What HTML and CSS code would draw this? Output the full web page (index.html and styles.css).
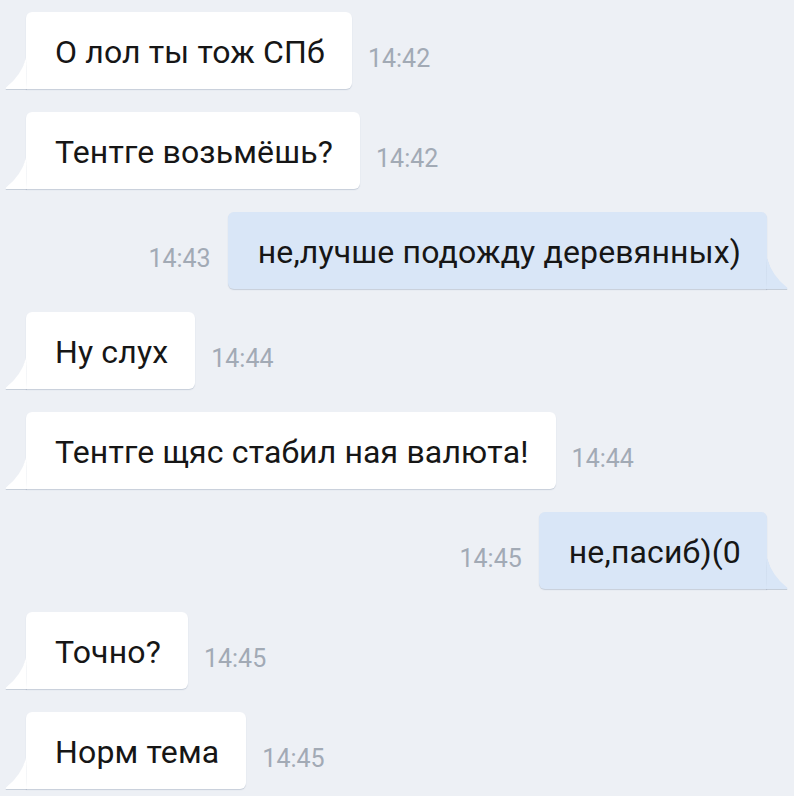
FILE: index.html
```html
<!DOCTYPE html>
<html lang="ru">
<head>
<meta charset="utf-8">
<link rel="stylesheet" href="styles.css">
</head>
<body>
<div class="chat">
  <div class="row in">
    <div class="bubble">О лол ты тож СПб<svg class="tail" viewBox="0 0 22 31"><path d="M21 0 Q16 18 1 29.5 Q0 31 2 31 L22 31 Z"/></svg></div>
    <span class="time">14:42</span>
  </div>
  <div class="row in">
    <div class="bubble">Тентге возьмёшь?<svg class="tail" viewBox="0 0 22 31"><path d="M21 0 Q16 18 1 29.5 Q0 31 2 31 L22 31 Z"/></svg></div>
    <span class="time">14:42</span>
  </div>
  <div class="row out">
    <span class="time">14:43</span>
    <div class="bubble">не,лучше подожду деревянных)<svg class="tail" viewBox="0 0 22 31"><path d="M1 0 Q6 18 21 29.5 Q22 31 20 31 L0 31 Z"/></svg></div>
  </div>
  <div class="row in">
    <div class="bubble">Ну слух<svg class="tail" viewBox="0 0 22 31"><path d="M21 0 Q16 18 1 29.5 Q0 31 2 31 L22 31 Z"/></svg></div>
    <span class="time">14:44</span>
  </div>
  <div class="row in">
    <div class="bubble">Тентге щяс стабил ная валюта!<svg class="tail" viewBox="0 0 22 31"><path d="M21 0 Q16 18 1 29.5 Q0 31 2 31 L22 31 Z"/></svg></div>
    <span class="time">14:44</span>
  </div>
  <div class="row out">
    <span class="time">14:45</span>
    <div class="bubble">не,пасиб)(0<svg class="tail" viewBox="0 0 22 31"><path d="M1 0 Q6 18 21 29.5 Q22 31 20 31 L0 31 Z"/></svg></div>
  </div>
  <div class="row in">
    <div class="bubble">Точно?<svg class="tail" viewBox="0 0 22 31"><path d="M21 0 Q16 18 1 29.5 Q0 31 2 31 L22 31 Z"/></svg></div>
    <span class="time">14:45</span>
  </div>
  <div class="row in">
    <div class="bubble">Норм тема<svg class="tail" viewBox="0 0 22 31"><path d="M21 0 Q16 18 1 29.5 Q0 31 2 31 L22 31 Z"/></svg></div>
    <span class="time">14:45</span>
  </div>
</div>
</body>
</html>
```

FILE: styles.css
```css
html, body {
  margin: 0;
  padding: 0;
  background: #edf0f5;
}
body {
  width: 794px;
  height: 796px;
  overflow: hidden;
  font-family: Roboto, "Noto Sans", sans-serif;
}
.chat {
  display: flex;
  flex-direction: column;
  gap: 23px;
  padding: 12px 27px 0 26px;
}
.row {
  display: flex;
  align-items: flex-end;
  gap: 16px;
}
.row.out {
  justify-content: flex-end;
  gap: 17px;
}
.bubble {
  position: relative;
  height: 77px;
  box-sizing: border-box;
  padding: 22px 27px 0 29px;
  font-size: 32px;
  line-height: 36px;
  letter-spacing: 0.15px;
  color: #161616;
  background: #fff;
  border-radius: 6px;
  box-shadow: 0 1px 1px rgba(150, 165, 185, 0.45);
  white-space: nowrap;
}
.in .bubble {
  border-bottom-left-radius: 0;
}
.out .bubble {
  background: #d9e6f7;
  border-bottom-right-radius: 0;
  padding-left: 30px;
  padding-right: 26px;
}
.tail {
  position: absolute;
  bottom: 0;
  width: 22px;
  height: 31px;
  fill: #fff;
  filter: drop-shadow(0 1px 0.5px rgba(150, 165, 185, 0.45));
}
.in .tail {
  left: -21px;
}
.out .tail {
  right: -21px;
  fill: #d9e6f7;
}
.time {
  font-size: 25px;
  line-height: 25px;
  color: #a2aab5;
  margin-bottom: 18px;
}
```
